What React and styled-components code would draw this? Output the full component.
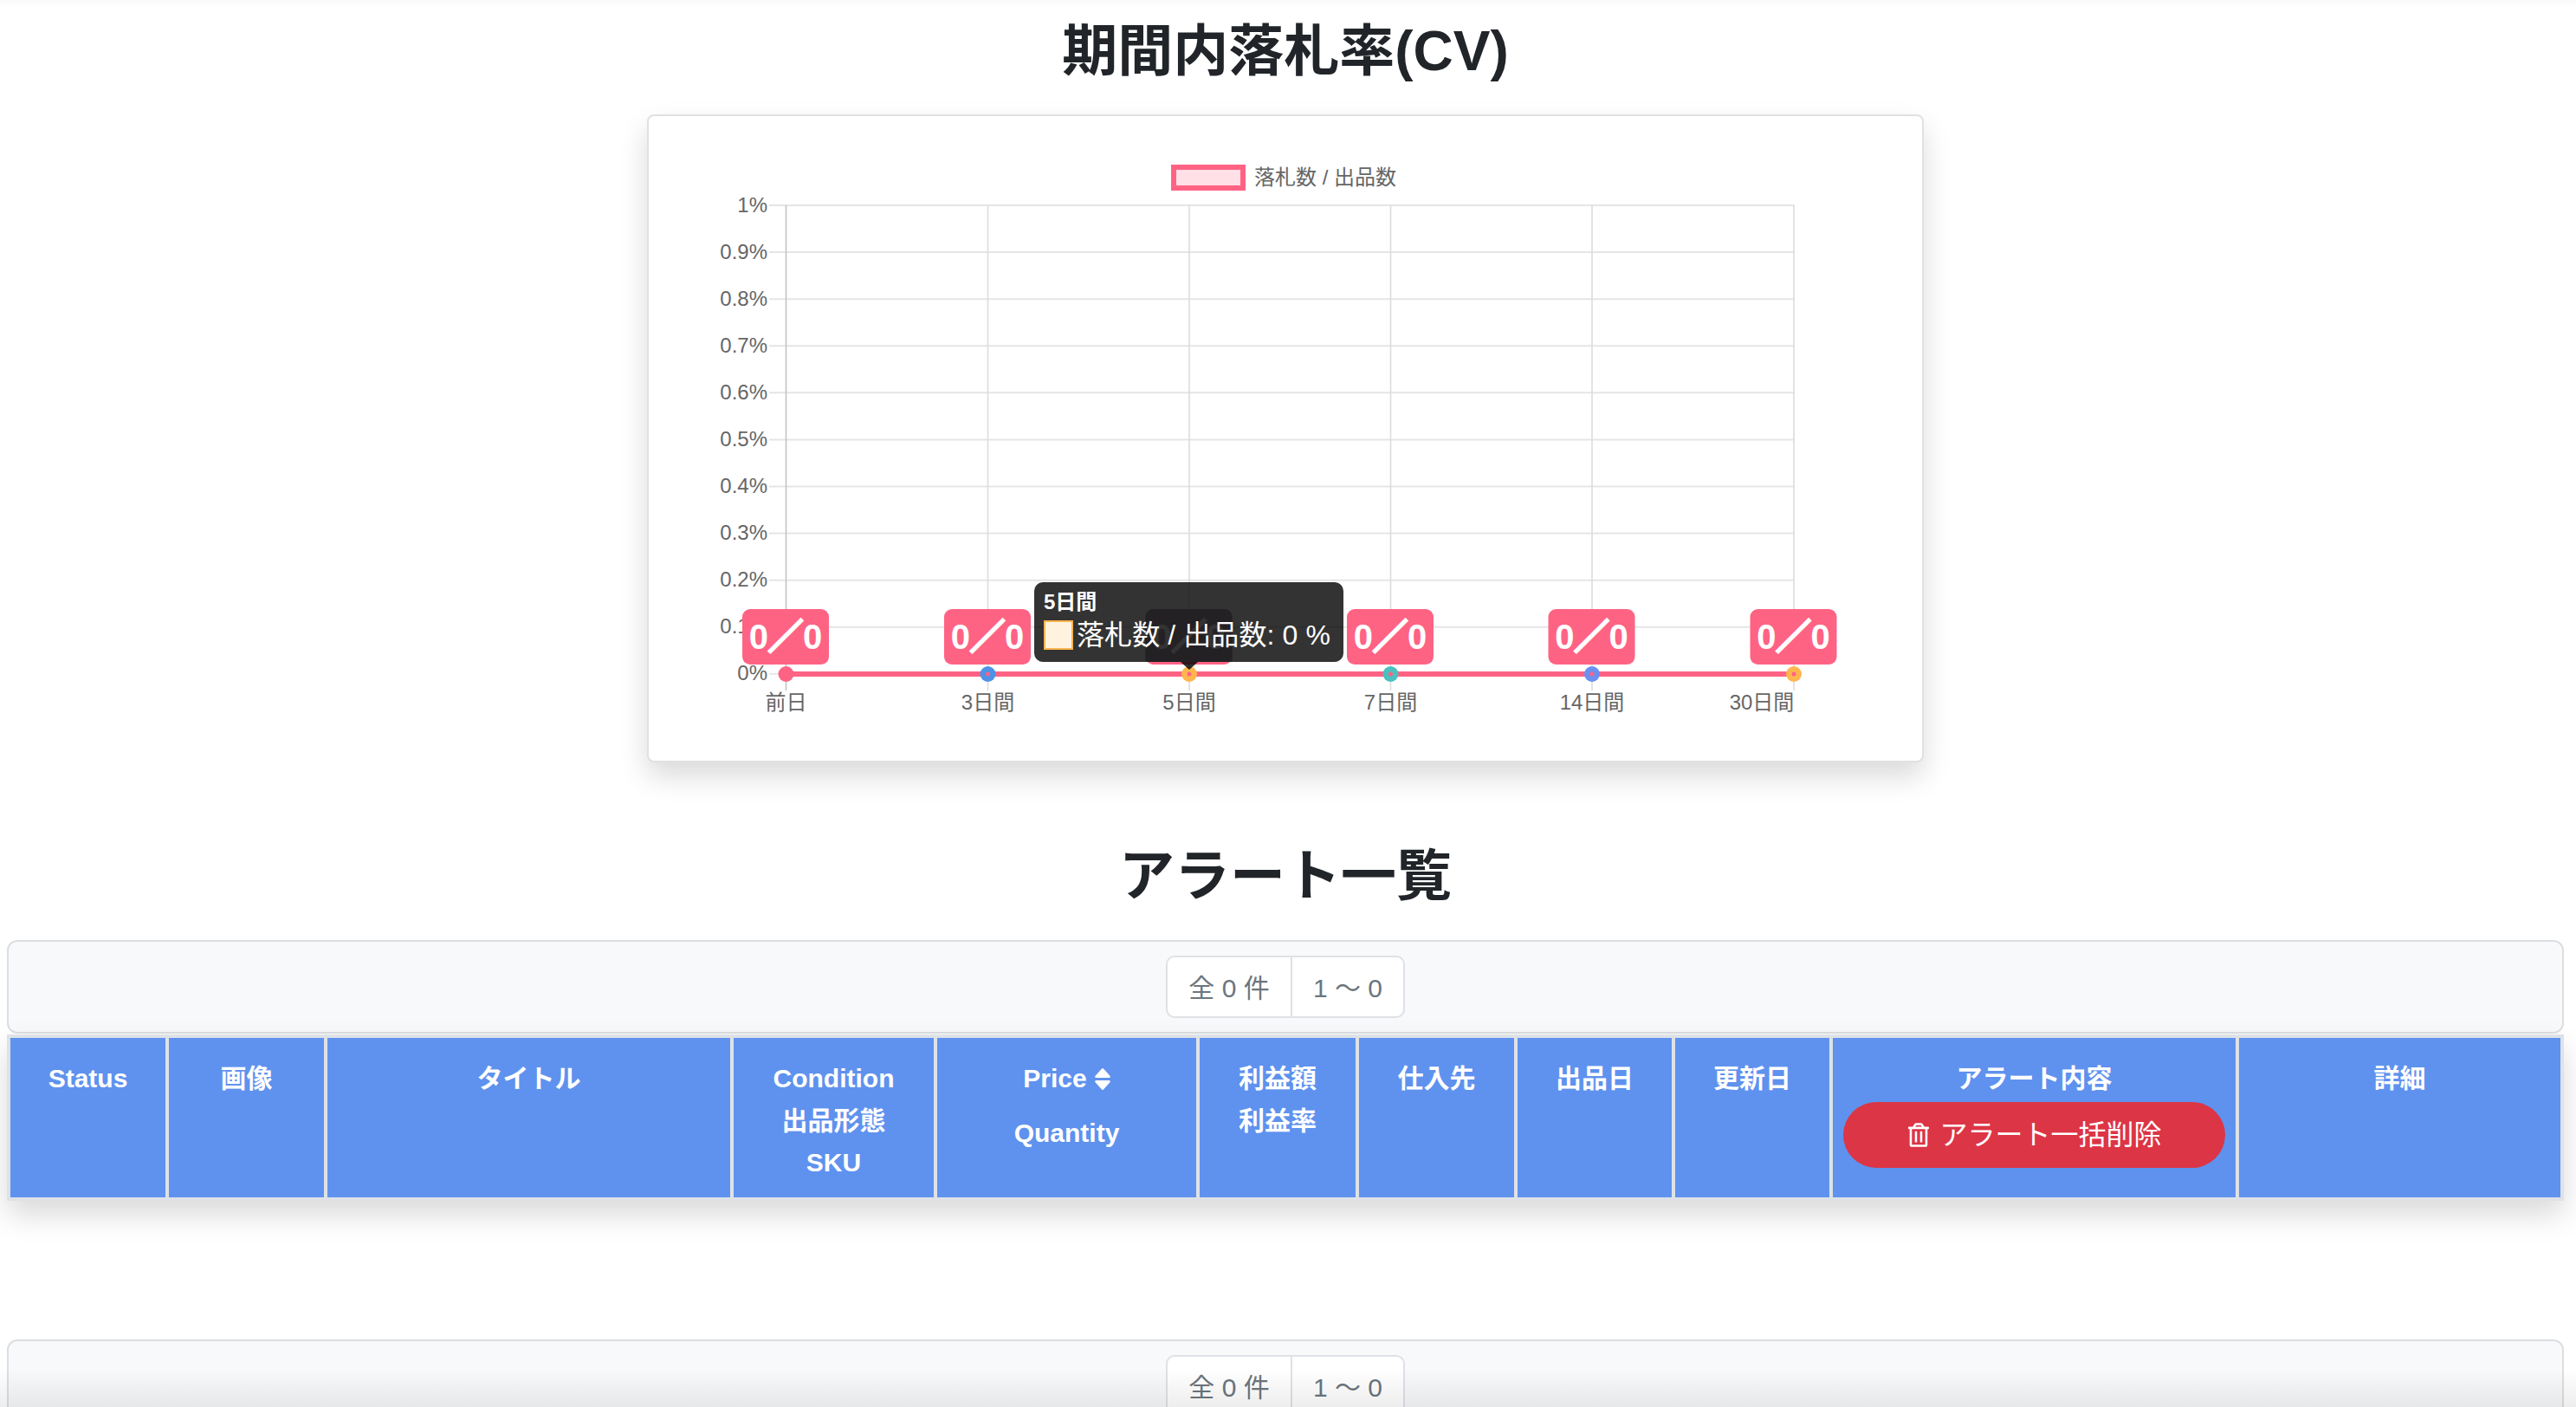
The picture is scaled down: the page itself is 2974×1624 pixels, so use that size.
import React from "react";
import styled, { createGlobalStyle } from "styled-components";
import { FaRegTrashAlt } from "react-icons/fa";

const FONT = '"Liberation Sans", "Noto Sans CJK JP", sans-serif';

const Global = createGlobalStyle`
  html, body { margin: 0; padding: 0; height: 100%; overflow: hidden; background: #fff; }
  body { font-family: ${FONT}; color: #212529; }
  * { box-sizing: border-box; }
`;

const Page = styled.div`
  position: relative;
  height: 1624px;
  overflow: hidden;
  padding: 21px 14px 0 8px;
  &::before {
    content: "";
    position: absolute;
    inset: 0 0 auto 0;
    height: 8px;
    background: linear-gradient(to bottom, rgba(0, 0, 0, 0.025), rgba(0, 0, 0, 0));
  }
  &::after {
    content: "";
    position: absolute;
    inset: auto 0 0 0;
    height: 44px;
    background: linear-gradient(to top, rgba(0, 0, 0, 0.07), rgba(0, 0, 0, 0));
  }
`;

const Title = styled.h1`
  margin: ${(p) => p.$top}px 0 ${(p) => p.$bottom}px;
  font-size: 64px;
  line-height: 77px;
  font-weight: 700;
  text-align: center;
  color: #212529;
`;

const ChartCard = styled.section`
  position: relative;
  width: 1474px;
  height: 748px;
  margin: 0 auto;
  background: #fff;
  border: 2px solid #dfe1e3;
  border-radius: 8px;
  box-shadow: 0 16px 32px rgba(0, 0, 0, 0.15);
`;

const ChartSvg = styled.svg`
  display: block;
  width: 1470px;
  height: 744px;
`;

const Tick = styled.text`
  font-family: ${FONT};
  font-size: 24px;
  fill: #666;
  dominant-baseline: central;
`;

const BadgeText = styled.text`
  font-family: ${FONT};
  font-size: 40px;
  font-weight: 700;
  fill: #fff;
`;

const BadgeSlash = styled.tspan`
  font-family: "Noto Sans CJK JP", sans-serif;
  font-weight: 900;
  stroke: #fff;
  stroke-width: 3px;
`;

const Tooltip = styled.div`
  position: absolute;
  left: 445px;
  top: 538px;
  width: 357px;
  height: 92px;
  padding: 9px 12px 0 11px;
  background: rgba(0, 0, 0, 0.8);
  border-radius: 10px;
  color: #fff;
  &::after {
    content: "";
    position: absolute;
    left: 169px;
    top: 92px;
    border-left: 10px solid transparent;
    border-right: 10px solid transparent;
    border-top: 9px solid rgba(0, 0, 0, 0.8);
  }
`;

const TooltipTitle = styled.div`
  font-size: 24px;
  line-height: 28px;
  font-weight: 700;
`;

const TooltipBody = styled.div`
  display: flex;
  align-items: center;
  margin-top: 2px;
  gap: 4px;
  font-size: 32px;
  line-height: 44px;
  letter-spacing: 0.1px;
  white-space: nowrap;
`;

const Swatch = styled.span`
  flex: none;
  width: 34px;
  height: 34px;
  background: #fff3e0;
  border: 2px solid #ffb64f;
`;

const PagerBar = styled.div`
  display: flex;
  justify-content: center;
  height: 108px;
  padding-top: 16px;
  background: #f8f9fa;
  border: 2px solid #dcdee1;
  border-radius: 12px;
`;

const Pager = styled.div`
  display: flex;
  height: 72px;
  background: #fff;
  border: 2px solid #dee2e6;
  border-radius: 10px;
  color: #6c757d;
  font-size: 30px;
`;

const PagerCell = styled.div`
  display: flex;
  align-items: center;
  justify-content: center;
  width: ${(p) => p.$width}px;
  padding-bottom: 3px;
  white-space: pre;
  & + & { border-left: 2px solid #dee2e6; }
`;

const HeaderTable = styled.div`
  display: grid;
  grid-template-columns: 179px 179px 465px 231px 299px 180px 179px 178px 178px 465px 371px;
  gap: 4px;
  height: 192px;
  margin-top: 1px;
  padding: 4px;
  background: #dee2e6;
  box-shadow: 0 16px 32px rgba(0, 0, 0, 0.15);
`;

const HeaderCell = styled.div`
  padding-top: 23px;
  background: #5f92ee;
  color: #fff;
  font-size: 30px;
  line-height: 48.5px;
  font-weight: 700;
  text-align: center;
`;

const HeaderLine = styled.div`
  margin-bottom: ${(p) => p.$gap || 0}px;
`;

const SortIcon = styled.svg`
  width: 18px;
  height: 25px;
  margin-left: 9px;
  vertical-align: -3px;
  fill: #fff;
`;

const DeleteButton = styled.button`
  display: flex;
  align-items: center;
  justify-content: center;
  gap: 12px;
  width: 441px;
  height: 76px;
  margin: 2px auto 0;
  padding: 0 0 6px 2px;
  border: 0;
  border-radius: 38px;
  background: #dc3545;
  color: #fff;
  font-family: ${FONT};
  font-size: 32px;
  font-weight: 400;
  svg { width: 24px; height: 28px; margin-top: 6px; }
`;

const SecondBar = styled(PagerBar)`
  margin-top: 160px;
`;

const GRID_Y = Array.from({ length: 11 }, (_, i) => 237 + 54.08 * i);
const Y_LABELS = ["1%", "0.9%", "0.8%", "0.7%", "0.6%", "0.5%", "0.4%", "0.3%", "0.2%", "0.1%", "0%"];
const POINTS = [
  { x: 907.5, label: "前日", color: "#ff6384", labelX: 907.5 },
  { x: 1140.5, label: "3日間", color: "#4f92e8", labelX: 1140.5 },
  { x: 1373, label: "5日間", color: "#ffb64f", labelX: 1373 },
  { x: 1605.5, label: "7日間", color: "#4bc0c0", labelX: 1605.5 },
  { x: 1838, label: "14日間", color: "#6d8fef", labelX: 1838 },
  { x: 2071, label: "30日間", color: "#ffb64f", labelX: 2034 },
];
const AXIS_Y = 778;

const Chart = () => (
  <ChartSvg viewBox="749 134 1470 744">
    <rect x="1352" y="190" width="86" height="30" fill="#ff6384" />
    <rect x="1358" y="196" width="74" height="18" fill="#ffe0e6" />
    <Tick x="1448" y="204" textAnchor="start">落札数 / 出品数</Tick>

    {GRID_Y.map((y) => (
      <line key={y} x1="888" x2="2072" y1={y} y2={y} stroke="#e5e5e5" strokeWidth="2" />
    ))}
    {POINTS.map((p, i) => (
      <line key={p.x} x1={p.x} x2={p.x} y1="237" y2="797" stroke={i === 0 ? "#c4c4c4" : "#dcdcdc"} strokeWidth="1.6" />
    ))}
    {Y_LABELS.map((t, i) => (
      <Tick key={t} x="886" y={GRID_Y[i] - 1} textAnchor="end">{t}</Tick>
    ))}
    {POINTS.map((p) => (
      <Tick key={p.label} x={p.labelX} y="810" textAnchor="middle">{p.label}</Tick>
    ))}

    <line x1="907.5" x2="2071" y1={AXIS_Y} y2={AXIS_Y} stroke="#ff6384" strokeWidth="6" />
    {POINTS.map((p) => (
      <g key={p.x}>
        <circle cx={p.x} cy={AXIS_Y} r="9" fill={p.color} />
        <circle cx={p.x} cy={AXIS_Y} r="2.5" fill="#ff6384" />
      </g>
    ))}
    {POINTS.map((p, i) => (
      <g key={p.x}>
        <rect x={p.x - 50.5} y="703" width="100" height="64" rx="9" fill="#ff6384" />
        {i === 2 && (
          <path
            d={`M${p.x - 50.5} 712a9 9 0 0 1 9-9h82a9 9 0 0 1 9 9V764H${p.x - 50.5}Z`}
            fill="#b4a5b4"
          />
        )}
        <BadgeText x={p.x - 0.5} y="749" textAnchor="middle">
          0<BadgeSlash>／</BadgeSlash>0
        </BadgeText>
      </g>
    ))}
  </ChartSvg>
);

const PagerRow = ({ as: Bar = PagerBar }) => (
  <Bar>
    <Pager>
      <PagerCell $width={142}>全 0 件</PagerCell>
      <PagerCell $width={130}>1 〜 0</PagerCell>
    </Pager>
  </Bar>
);

export default function App() {
  return (
    <Page>
      <Global />
      <Title $top={0} $bottom={34}>期間内落札率(CV)</Title>
      <ChartCard>
        <Chart />
        <Tooltip>
          <TooltipTitle>5日間</TooltipTitle>
          <TooltipBody>
            <Swatch />
            落札数 / 出品数: 0 %
          </TooltipBody>
        </Tooltip>
      </ChartCard>
      <Title $top={93} $bottom={35}>アラート一覧</Title>
      <PagerRow />
      <HeaderTable>
        <HeaderCell>Status</HeaderCell>
        <HeaderCell>画像</HeaderCell>
        <HeaderCell>タイトル</HeaderCell>
        <HeaderCell>
          <HeaderLine>Condition</HeaderLine>
          <HeaderLine>出品形態</HeaderLine>
          <HeaderLine>SKU</HeaderLine>
        </HeaderCell>
        <HeaderCell>
          <HeaderLine $gap={14}>
            Price
            <SortIcon viewBox="0 0 18 25">
              <path d="M8 .6a1.4 1.4 0 0 1 2 0l7.4 8.2c.8.9.2 2.2-1 2.2H1.6c-1.2 0-1.8-1.3-1-2.2z" />
              <path d="M8 24.4a1.4 1.4 0 0 0 2 0l7.4-8.2c.8-.9.2-2.2-1-2.2H1.6c-1.2 0-1.8 1.3-1 2.2z" />
            </SortIcon>
          </HeaderLine>
          <HeaderLine>Quantity</HeaderLine>
        </HeaderCell>
        <HeaderCell>
          <HeaderLine>利益額</HeaderLine>
          <HeaderLine>利益率</HeaderLine>
        </HeaderCell>
        <HeaderCell>仕入先</HeaderCell>
        <HeaderCell>出品日</HeaderCell>
        <HeaderCell>更新日</HeaderCell>
        <HeaderCell>
          <HeaderLine>アラート内容</HeaderLine>
          <DeleteButton>
            <FaRegTrashAlt />
            アラート一括削除
          </DeleteButton>
        </HeaderCell>
        <HeaderCell>詳細</HeaderCell>
      </HeaderTable>
      <PagerRow as={SecondBar} />
    </Page>
  );
}
